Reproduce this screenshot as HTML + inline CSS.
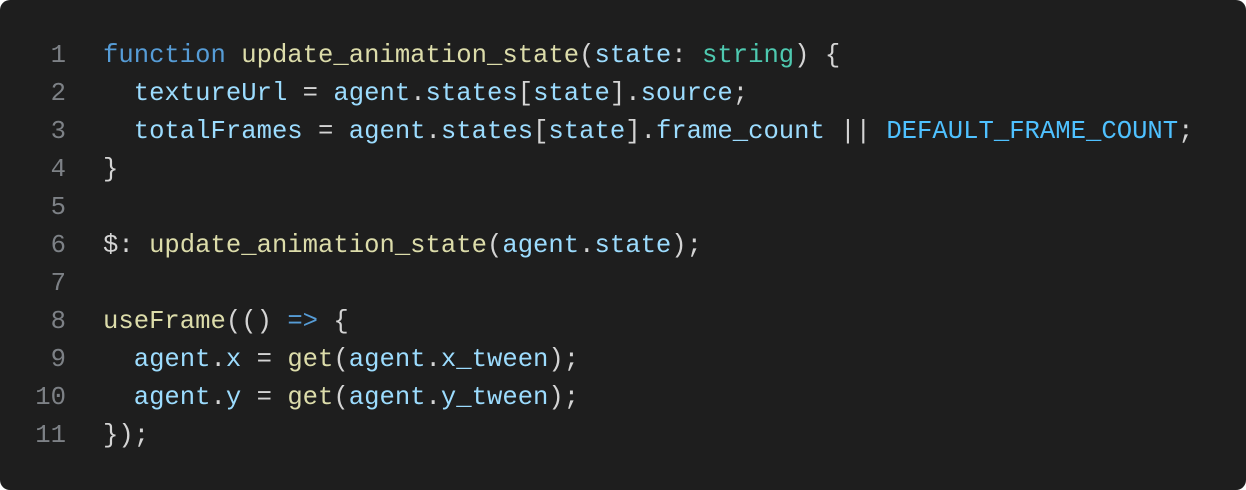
<!DOCTYPE html>
<html><head><style>
html,body{margin:0;padding:0;background:#fff;width:1246px;height:490px;overflow:hidden}
.box{position:absolute;left:0;top:0;width:1246px;height:490px;background:#1e1e1e;border-radius:10px}
pre{margin:0;position:absolute;top:37px;left:0;font-family:"Liberation Mono",monospace;font-size:25.6px;line-height:38px;color:#d4d4d4;white-space:pre}
.ln{position:absolute;left:0;width:66px;text-align:right;color:#7d8186}
.cd{position:absolute;left:103px}
.k{color:#569cd6}.f{color:#dcdcaa}.v{color:#9cdcfe}.t{color:#4ec9b0}.c{color:#4fc1ff}
</style></head><body><div class="box">
<pre class="ln">1
2
3
4
5
6
7
8
9
10
11</pre>
<pre class="cd"><span class="k">function</span> <span class="f">update_animation_state</span>(<span class="v">state</span>: <span class="t">string</span>) {
  <span class="v">textureUrl</span> = <span class="v">agent</span>.<span class="v">states</span>[<span class="v">state</span>].<span class="v">source</span>;
  <span class="v">totalFrames</span> = <span class="v">agent</span>.<span class="v">states</span>[<span class="v">state</span>].<span class="v">frame_count</span> || <span class="c">DEFAULT_FRAME_COUNT</span>;
}

$: <span class="f">update_animation_state</span>(<span class="v">agent</span>.<span class="v">state</span>);

<span class="f">useFrame</span>(() <span class="k">=&gt;</span> {
  <span class="v">agent</span>.<span class="v">x</span> = <span class="f">get</span>(<span class="v">agent</span>.<span class="v">x_tween</span>);
  <span class="v">agent</span>.<span class="v">y</span> = <span class="f">get</span>(<span class="v">agent</span>.<span class="v">y_tween</span>);
});</pre>
</div></body></html>
